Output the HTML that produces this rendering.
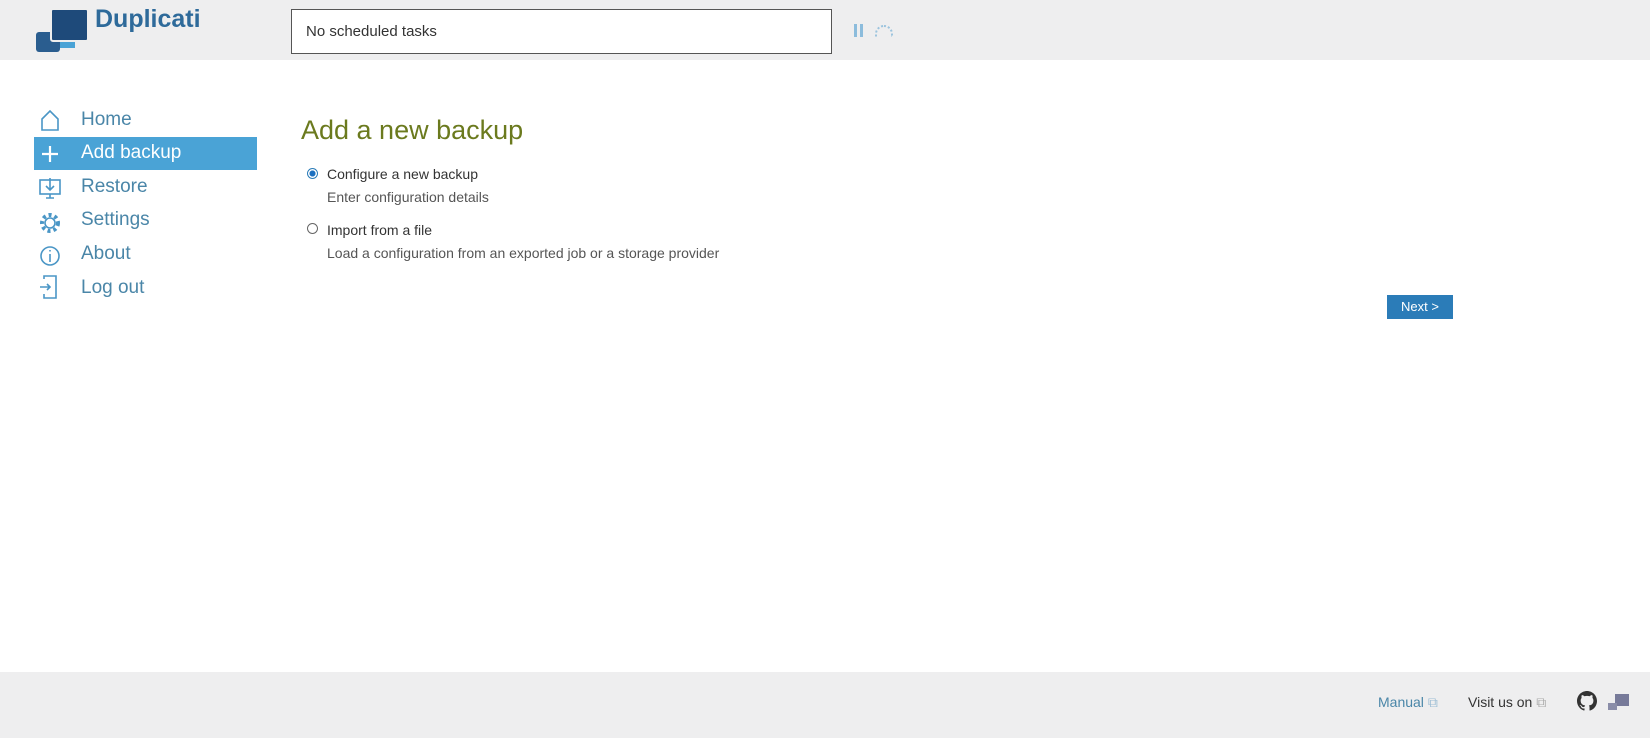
<!DOCTYPE html>
<html><head><meta charset="utf-8"><style>
body{margin:0;width:1650px;height:738px;background:#fff;font-family:"Liberation Sans","DejaVu Sans",sans-serif;position:relative;overflow:hidden}
.hdr{position:absolute;left:0;top:0;width:1650px;height:60px;background:#eeeeef}
.ftr{position:absolute;left:0;top:672px;width:1650px;height:66px;background:#eeeeef}
.a{position:absolute}
.task{left:291px;top:9px;border:1px solid #555;background:#fff;font-size:15px;color:#333;line-height:43px;padding-left:14px;box-sizing:border-box;width:541px;height:45px}
.nav{font-size:19px;color:#4a86a8;left:81px}
.act{left:34px;top:137px;width:223px;height:33px;background:#4aa3d6}
h1{position:absolute;margin:0;left:301px;top:115px;font-size:27px;font-weight:normal;color:#6b7a1e}
.opt{font-size:14px;color:#333;left:327px}
.sub{font-size:14px;color:#555;left:327px}
.btn{left:1387px;top:295px;width:66px;height:24px;background:#2b7cb8;color:#fff;font-size:13px;text-align:center;line-height:24px}
</style></head><body>
<div class="hdr"></div>
<div class="a" style="left:36px;top:32px;width:24px;height:20px;background:#2a5d8f;border-radius:3px"></div>
<div class="a" style="left:60px;top:38px;width:15px;height:10px;background:#4aa3d6"></div>
<div class="a" style="left:50px;top:8px;width:35px;height:30px;background:#1e4a7a;border-radius:3px;border:2px solid #eee"></div>
<div class="a" style="left:95px;top:5px;font-size:25px;font-weight:bold;color:#2e6a9a">Duplicati</div>
<div class="a task">No scheduled tasks</div>
<div class="a" style="left:854px;top:24px;width:3px;height:13px;background:#8cbcdc;box-shadow:6px 0 0 #8cbcdc"></div>
<div class="a" style="left:875px;top:25px;width:14px;height:10px;border:2px dotted #9cc4de;border-bottom:none;border-radius:10px 10px 0 0"></div>

<div class="a act"></div>
<svg class="a" style="left:38px;top:108px" width="24" height="200" fill="none" stroke="#4a96c6" stroke-width="1.6">
<path d="M4 22V11L12 3L20 11V22Z"/>
<path d="M12 38V54M4 46H20" stroke="#fff" stroke-width="2.2"/>
<rect x="2" y="72" width="20" height="14"/><path d="M8 90H16M12 86V90M12 70V82M8 78L12 82L16 78"/>
<circle cx="12" cy="115" r="5"/><circle cx="12" cy="115" r="8" stroke-width="4" stroke-dasharray="3 3"/>
<circle cx="12" cy="148" r="9"/><path d="M12 146V154M12 142V143.5"/>
<path d="M6 171V168H18V190H6V186M2 179H12M9 176L12 179L9 182"/>
</svg>
<div class="a nav" style="top:109px">Home</div>
<div class="a nav" style="top:142px;color:#fff">Add backup</div>
<div class="a nav" style="top:176px">Restore</div>
<div class="a nav" style="top:209px">Settings</div>
<div class="a nav" style="top:243px">About</div>
<div class="a nav" style="top:277px">Log out</div>

<h1>Add a new backup</h1>
<div class="a" style="left:307px;top:168px;width:9px;height:9px;border:1px solid #2b7cb8;border-radius:50%;background:radial-gradient(#1a6fc0 45%,#fff 50%)"></div>
<div class="a opt" style="top:166px">Configure a new backup</div>
<div class="a sub" style="top:189px">Enter configuration details</div>
<div class="a" style="left:307px;top:223px;width:9px;height:9px;border:1px solid #666;border-radius:50%"></div>
<div class="a opt" style="top:222px">Import from a file</div>
<div class="a sub" style="top:245px">Load a configuration from an exported job or a storage provider</div>
<div class="a btn">Next &gt;</div>

<div class="ftr"></div>
<div class="a" style="left:1378px;top:694px;font-size:14px;color:#4a86a8">Manual <span style="color:#9bbcd4">⧉</span></div>
<div class="a" style="left:1468px;top:694px;font-size:14px;color:#333">Visit us on <span style="color:#aaa">⧉</span></div>
<svg class="a" style="left:1577px;top:691px" width="20" height="20" viewBox="0 0 16 16"><path fill="#333" d="M8 0C3.58 0 0 3.58 0 8c0 3.54 2.29 6.53 5.47 7.59.4.07.55-.17.55-.38v-1.33c-2.23.48-2.7-1.07-2.7-1.07-.36-.92-.89-1.17-.89-1.17-.73-.5.06-.49.06-.49.8.06 1.23.83 1.23.83.71 1.22 1.87.87 2.33.66.07-.52.28-.87.51-1.07-1.78-.2-3.64-.89-3.64-3.95 0-.87.31-1.59.82-2.15-.08-.2-.36-1.02.08-2.12 0 0 .67-.21 2.2.82a7.6 7.6 0 0 1 4 0c1.53-1.04 2.2-.82 2.2-.82.44 1.1.16 1.92.08 2.12.51.56.82 1.27.82 2.15 0 3.07-1.87 3.75-3.65 3.95.29.25.54.73.54 1.48v2.2c0 .21.15.46.55.38A8 8 0 0 0 16 8c0-4.42-3.58-8-8-8z"/></svg>
<div class="a" style="left:1615px;top:694px;width:14px;height:12px;background:#777a99"></div>
<div class="a" style="left:1608px;top:703px;width:9px;height:7px;background:#8a8da8"></div>
</body></html>
